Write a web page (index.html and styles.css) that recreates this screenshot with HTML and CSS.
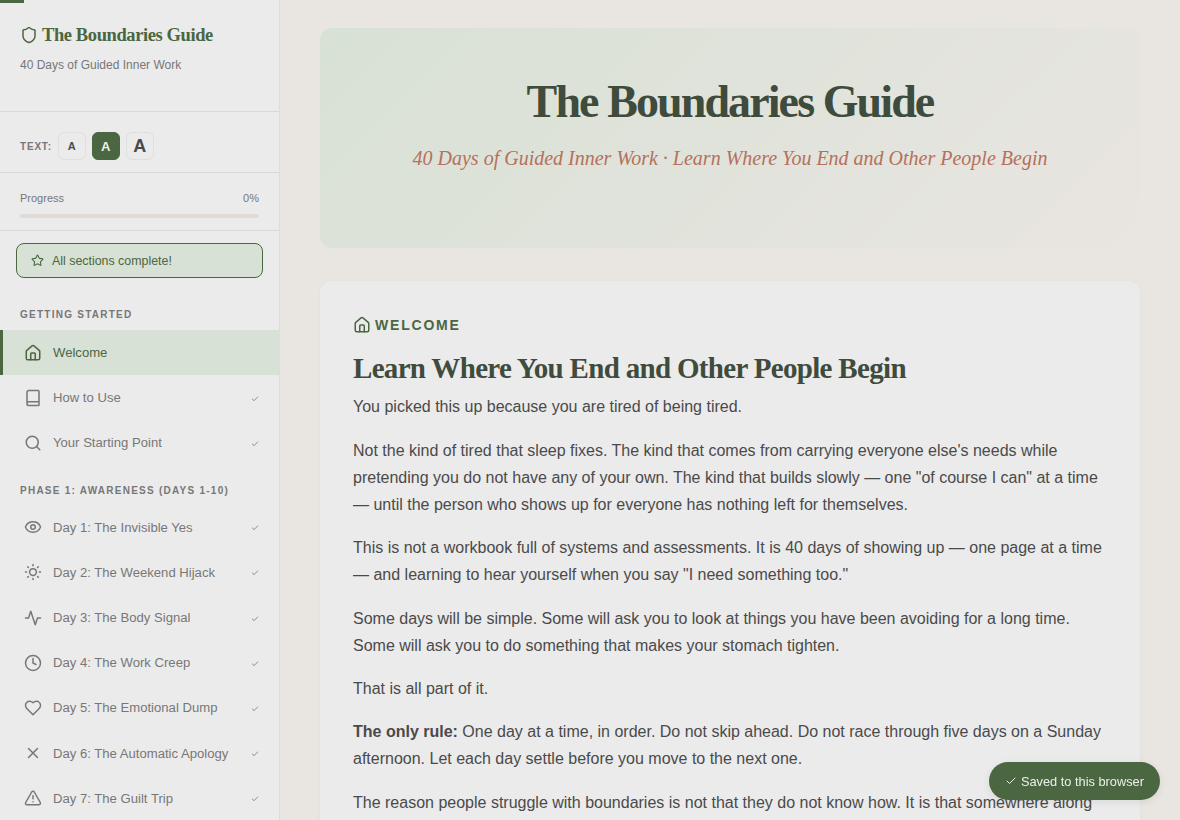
FILE: index.html
```html
<!DOCTYPE html>
<html lang="en">
<head>
  <meta charset="UTF-8">
  <title>The Boundaries Guide</title>
  <link rel="stylesheet" href="styles.css">
</head>
<body>
<svg class="sprite" xmlns="http://www.w3.org/2000/svg">
  <symbol id="i-shield" viewBox="0 0 24 24"><path d="M20 13c0 5-3.5 7.5-7.66 8.95a1 1 0 0 1-.67-.01C7.5 20.5 4 18 4 13V6a1 1 0 0 1 1-1c2 0 4.5-1.2 6.24-2.72a1.17 1.17 0 0 1 1.52 0C14.51 3.81 17 5 19 5a1 1 0 0 1 1 1z"/></symbol>
  <symbol id="i-home" viewBox="0 0 24 24"><path d="M15 21v-8a1 1 0 0 0-1-1h-4a1 1 0 0 0-1 1v8"/><path d="M3 10a2 2 0 0 1 .709-1.528l7-5.999a2 2 0 0 1 2.582 0l7 5.999A2 2 0 0 1 21 10v9a2 2 0 0 1-2 2H5a2 2 0 0 1-2-2z"/></symbol>
  <symbol id="i-book" viewBox="0 0 24 24"><path d="M4 19.5v-15A2.5 2.5 0 0 1 6.5 2H19a1 1 0 0 1 1 1v18a1 1 0 0 1-1 1H6.5a1 1 0 0 1 0-5H20"/></symbol>
  <symbol id="i-search" viewBox="0 0 24 24"><circle cx="11" cy="11" r="8"/><path d="m21 21-4.3-4.3"/></symbol>
  <symbol id="i-eye" viewBox="0 0 24 24"><path d="M2.062 12.348a1 1 0 0 1 0-.696 10.75 10.75 0 0 1 19.876 0 1 1 0 0 1 0 .696 10.75 10.75 0 0 1-19.876 0"/><circle cx="12" cy="12" r="3"/></symbol>
  <symbol id="i-sun" viewBox="0 0 24 24"><circle cx="12" cy="12" r="4.5"/><path d="M12 2v1.5M12 20.5V22M4.93 4.93l1 1M18.07 18.07l1 1M2 12h1.5M20.5 12H22M5.93 18.07l-1 1M19.07 4.93l-1 1"/></symbol>
  <symbol id="i-activity" viewBox="0 0 24 24"><path d="M22 12h-4l-3 9L9 3l-3 9H2"/></symbol>
  <symbol id="i-clock" viewBox="0 0 24 24"><circle cx="12" cy="12" r="10"/><path d="M12 6v6l4 2"/></symbol>
  <symbol id="i-heart" viewBox="0 0 24 24"><path d="M19 14c1.49-1.46 3-3.21 3-5.5A5.5 5.5 0 0 0 16.5 3c-1.76 0-3 .5-4.5 2-1.5-1.5-2.74-2-4.5-2A5.5 5.5 0 0 0 2 8.5c0 2.3 1.5 4.05 3 5.5l7 7Z"/></symbol>
  <symbol id="i-x" viewBox="0 0 24 24"><path d="M18 6 6 18M6 6l12 12"/></symbol>
  <symbol id="i-alert" viewBox="0 0 24 24"><path d="m21.73 18-8-14a2 2 0 0 0-3.48 0l-8 14A2 2 0 0 0 4 21h16a2 2 0 0 0 1.73-3"/><path d="M12 9v4M12 17h.01"/></symbol>
  <symbol id="i-star" viewBox="0 0 24 24"><path d="M11.525 2.295a.53.53 0 0 1 .95 0l2.31 4.679a2.123 2.123 0 0 0 1.595 1.16l5.166.756a.53.53 0 0 1 .294.904l-3.736 3.638a2.123 2.123 0 0 0-.611 1.878l.882 5.14a.53.53 0 0 1-.771.56l-4.618-2.428a2.122 2.122 0 0 0-1.973 0L6.396 21.01a.53.53 0 0 1-.77-.56l.881-5.139a2.122 2.122 0 0 0-.611-1.879L2.16 9.795a.53.53 0 0 1 .294-.906l5.165-.755a2.122 2.122 0 0 0 1.597-1.16z"/></symbol>
  <symbol id="i-check" viewBox="0 0 24 24"><path d="M20 6 9 17l-5-5"/></symbol>
</svg>

<div class="app">
  <aside class="sidebar">
    <div class="topBar"></div>
    <header class="brand">
      <div class="brandTitle">
        <svg class="icon brandIcon"><use href="#i-shield"/></svg>
        <span>The Boundaries Guide</span>
      </div>
      <p class="brandSub">40 Days of Guided Inner Work</p>
    </header>

    <div class="textControls">
      <span class="textLabel">TEXT:</span>
      <button class="sizeBtn sizeSmall">A</button>
      <button class="sizeBtn sizeMedium active">A</button>
      <button class="sizeBtn sizeLarge">A</button>
    </div>

    <div class="progress">
      <div class="progressHead"><span>Progress</span><span>0%</span></div>
      <div class="progressTrack"></div>
    </div>

    <div class="completeBadge">
      <svg class="icon badgeIcon"><use href="#i-star"/></svg>
      <span>All sections complete!</span>
    </div>

    <nav class="nav">
      <h4 class="navLabel">GETTING STARTED</h4>
      <a class="navItem current"><svg class="icon"><use href="#i-home"/></svg><span>Welcome</span></a>
      <a class="navItem"><svg class="icon"><use href="#i-book"/></svg><span>How to Use</span><svg class="tick"><use href="#i-check"/></svg></a>
      <a class="navItem"><svg class="icon"><use href="#i-search"/></svg><span>Your Starting Point</span><svg class="tick"><use href="#i-check"/></svg></a>

      <h4 class="navLabel phase">PHASE 1: AWARENESS (DAYS 1-10)</h4>
      <a class="navItem"><svg class="icon"><use href="#i-eye"/></svg><span>Day 1: The Invisible Yes</span><svg class="tick"><use href="#i-check"/></svg></a>
      <a class="navItem"><svg class="icon"><use href="#i-sun"/></svg><span>Day 2: The Weekend Hijack</span><svg class="tick"><use href="#i-check"/></svg></a>
      <a class="navItem"><svg class="icon"><use href="#i-activity"/></svg><span>Day 3: The Body Signal</span><svg class="tick"><use href="#i-check"/></svg></a>
      <a class="navItem"><svg class="icon"><use href="#i-clock"/></svg><span>Day 4: The Work Creep</span><svg class="tick"><use href="#i-check"/></svg></a>
      <a class="navItem"><svg class="icon"><use href="#i-heart"/></svg><span>Day 5: The Emotional Dump</span><svg class="tick"><use href="#i-check"/></svg></a>
      <a class="navItem"><svg class="icon"><use href="#i-x"/></svg><span>Day 6: The Automatic Apology</span><svg class="tick"><use href="#i-check"/></svg></a>
      <a class="navItem"><svg class="icon"><use href="#i-alert"/></svg><span>Day 7: The Guilt Trip</span><svg class="tick"><use href="#i-check"/></svg></a>
    </nav>
  </aside>

  <main class="content">
    <section class="hero">
      <h1>The Boundaries Guide</h1>
      <p>40 Days of Guided Inner Work &middot; Learn Where You End and Other People Begin</p>
    </section>

    <article class="card">
      <div class="cardTag">
        <svg class="icon"><use href="#i-home"/></svg>
        <span>WELCOME</span>
      </div>
      <h2>Learn Where You End and Other People Begin</h2>
      <p>You picked this up because you are tired of being tired.</p>
      <p>Not the kind of tired that sleep fixes. The kind that comes from carrying everyone else's needs while pretending you do not have any of your own. The kind that builds slowly &mdash; one "of course I can" at a time &mdash; until the person who shows up for everyone has nothing left for themselves.</p>
      <p>This is not a workbook full of systems and assessments. It is 40 days of showing up &mdash; one page at a time &mdash; and learning to hear yourself when you say "I need something too."</p>
      <p>Some days will be simple. Some will ask you to look at things you have been avoiding for a long time. Some will ask you to do something that makes your stomach tighten.</p>
      <p>That is all part of it.</p>
      <p><strong>The only rule:</strong> One day at a time, in order. Do not skip ahead. Do not race through five days on a Sunday afternoon. Let each day settle before you move to the next one.</p>
      <p>The reason people struggle with boundaries is not that they do not know how. It is that somewhere along</p>
    </article>
  </main>
</div>

<div class="toast">
  <svg class="toastIcon"><use href="#i-check"/></svg>
  <span>Saved to this browser</span>
</div>
</body>
</html>
```

FILE: styles.css
```css
:root {
  --green: #4a6741;
  --greenDark: #3f4b3c;
  --greenSoft: #d8e1d5;
  --page: #e9e5e1;
  --panel: #ebebeb;
  --line: #d8d8d6;
  --text: #4a4a4a;
  --muted: #777777;
  --terracotta: #b5705c;
}
* {
  box-sizing: border-box;
}
html, body {
  margin: 0;
  height: 100%;
  overflow: hidden;
}
body {
  background: var(--page);
  color: var(--text);
  font-family: "Liberation Sans", Arial, sans-serif;
}
.sprite {
  display: none;
}
.icon {
  width: 18px;
  height: 18px;
  flex: none;
  fill: none;
  stroke: currentColor;
  stroke-width: 2;
  stroke-linecap: round;
  stroke-linejoin: round;
}
.app {
  display: flex;
  height: 100vh;
}

/* sidebar */
.sidebar {
  width: 280px;
  flex: none;
  position: relative;
  background: var(--panel);
  border-right: 1px solid #dedcda;
  overflow: hidden;
}
.topBar {
  position: absolute;
  top: 0;
  left: 0;
  width: 24px;
  height: 3px;
  background: var(--green);
}
.brand {
  height: 112px;
  padding: 24px 20px 0;
  border-bottom: 1px solid var(--line);
}
.brandTitle {
  display: flex;
  align-items: center;
  gap: 4px;
  color: var(--green);
  font-family: "Liberation Serif", "Times New Roman", serif;
  font-weight: 700;
  font-size: 18.5px;
  line-height: 22px;
  letter-spacing: -0.4px;
}
.brandIcon {
  width: 18px;
  height: 18px;
}
.brandSub {
  margin: 11px 0 0;
  font-size: 12px;
  line-height: 16px;
  color: var(--muted);
}
.textControls {
  height: 61px;
  padding: 20px 20px 12px;
  display: flex;
  align-items: center;
  gap: 6px;
  border-bottom: 1px solid var(--line);
}
.textLabel {
  font-size: 10px;
  font-weight: 700;
  letter-spacing: 0.8px;
  color: var(--muted);
}
.sizeBtn {
  width: 28px;
  height: 28px;
  padding: 0;
  border: 1px solid #dfdfdd;
  border-radius: 6px;
  background: var(--panel);
  color: var(--text);
  font-family: inherit;
  font-weight: 700;
}
.sizeSmall { font-size: 11px; }
.sizeMedium { font-size: 13px; }
.sizeLarge { font-size: 18px; }
.sizeBtn.active {
  background: var(--green);
  border-color: var(--green);
  color: #eef0ea;
}
.progress {
  height: 58px;
  padding: 18px 20px 0;
  border-bottom: 1px solid var(--line);
}
.progressHead {
  display: flex;
  justify-content: space-between;
  font-size: 11px;
  line-height: 14px;
  color: var(--muted);
}
.progressTrack {
  height: 4px;
  margin-top: 9px;
  border-radius: 2px;
  background: #e0dbd6;
}
.completeBadge {
  height: 35px;
  margin: 12px 16px 0;
  padding: 0 14px;
  display: flex;
  align-items: center;
  gap: 8px;
  background: var(--greenSoft);
  border: 1px solid var(--green);
  border-radius: 8px;
  color: var(--green);
  font-size: 12.4px;
}
.badgeIcon {
  width: 13px;
  height: 13px;
  stroke-width: 2;
}
.navLabel {
  margin: 0;
  padding: 31px 20px 9px;
  font-size: 10px;
  line-height: 12px;
  font-weight: 700;
  letter-spacing: 1.25px;
  color: var(--muted);
}
.navLabel.phase {
  padding-top: 19px;
  padding-bottom: 8px;
}
.navItem {
  height: 45.2px;
  padding: 0 20px 0 24px;
  display: flex;
  align-items: center;
  gap: 11px;
  font-size: 13.12px;
  color: var(--muted);
}
.navItem span {
  flex: 1;
}
.navItem.current {
  background: var(--greenSoft);
  border-left: 3px solid var(--green);
  padding-left: 21px;
  color: var(--green);
}
.tick {
  width: 8px;
  height: 8px;
  margin-top: 2px;
  flex: none;
  fill: none;
  stroke: var(--muted);
  stroke-width: 2.5;
  stroke-linecap: round;
  stroke-linejoin: round;
}

/* main column */
.content {
  flex: 1;
  padding: 28px 40px;
  overflow: hidden;
}
.hero {
  height: 220px;
  padding-top: 46px;
  border-radius: 12px;
  background: linear-gradient(135deg, var(--greenSoft), var(--page));
  text-align: center;
}
.hero h1 {
  margin: 0;
  font-family: "Liberation Serif", "Times New Roman", serif;
  font-size: 46px;
  line-height: 56px;
  font-weight: 700;
  letter-spacing: -1.9px;
  color: var(--greenDark);
}
.hero p {
  margin: 15px 0 0;
  font-family: "Liberation Serif", "Times New Roman", serif;
  font-style: italic;
  font-size: 20px;
  line-height: 26px;
  color: var(--terracotta);
}
.card {
  margin-top: 33px;
  padding: 32px 33px;
  background: var(--panel);
  border-radius: 12px;
  box-shadow: 0 1px 4px rgba(0, 0, 0, 0.03);
}
.cardTag {
  display: flex;
  align-items: center;
  gap: 4px;
  color: var(--green);
  font-size: 14px;
  line-height: 24px;
  font-weight: 700;
  letter-spacing: 1.8px;
}
.card h2 {
  margin: 13px 0 7.4px;
  font-family: "Liberation Serif", "Times New Roman", serif;
  font-size: 29px;
  line-height: 36px;
  font-weight: 700;
  letter-spacing: -0.68px;
  color: var(--greenDark);
}
.card p {
  margin: 0 0 16px;
  font-size: 16px;
  line-height: 27.2px;
}

/* toast */
.toast {
  position: fixed;
  right: 20px;
  bottom: 20px;
  height: 38px;
  padding: 0 16px;
  display: flex;
  align-items: center;
  gap: 4px;
  background: var(--green);
  border-radius: 19px;
  color: #eef0ea;
  font-size: 12.8px;
  box-shadow: 0 2px 8px rgba(0, 0, 0, 0.08);
}
.toastIcon {
  width: 12px;
  height: 12px;
  fill: none;
  stroke: currentColor;
  stroke-width: 2;
  stroke-linecap: round;
  stroke-linejoin: round;
}
```
